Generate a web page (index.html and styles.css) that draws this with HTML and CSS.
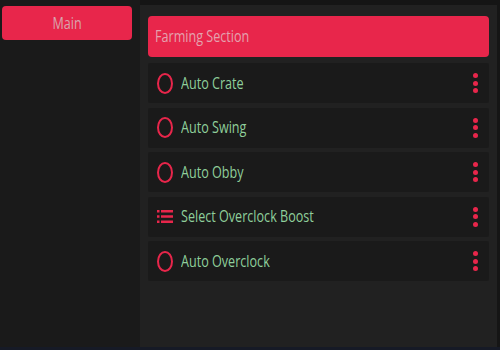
FILE: index.html
```html
<!DOCTYPE html>
<html lang="en">
<head>
  <meta charset="UTF-8">
  <title>Farming</title>
  <link rel="stylesheet" href="styles.css">
</head>
<body>

<div class="window">
  <div class="sidebar">
    <button class="tab active"><span>Main</span></button>
  </div>

  <div class="panel">
    <div class="section-title"><span>Farming Section</span></div>

    <div class="row">
      <span class="toggle"></span>
      <span class="label">Auto Crate</span>
      <span class="more"><i></i><i></i><i></i></span>
    </div>

    <div class="row">
      <span class="toggle"></span>
      <span class="label">Auto Swing</span>
      <span class="more"><i></i><i></i><i></i></span>
    </div>

    <div class="row">
      <span class="toggle"></span>
      <span class="label">Auto Obby</span>
      <span class="more"><i></i><i></i><i></i></span>
    </div>

    <div class="row">
      <svg class="list-icon" width="16" height="13" viewBox="0 0 16 13">
        <rect x="0" y="0" width="2.5" height="2.5" fill="#e8264b"/>
        <rect x="4" y="0" width="12" height="2.5" fill="#e8264b"/>
        <rect x="0" y="5.25" width="2.5" height="2.5" fill="#e8264b"/>
        <rect x="4" y="5.25" width="12" height="2.5" fill="#e8264b"/>
        <rect x="0" y="10.5" width="2.5" height="2.5" fill="#e8264b"/>
        <rect x="4" y="10.5" width="12" height="2.5" fill="#e8264b"/>
      </svg>
      <span class="label">Select Overclock Boost</span>
      <span class="more"><i></i><i></i><i></i></span>
    </div>

    <div class="row">
      <span class="toggle"></span>
      <span class="label">Auto Overclock</span>
      <span class="more"><i></i><i></i><i></i></span>
    </div>
  </div>
</div>

</body>
</html>
```

FILE: styles.css
```css
html, body {
  margin: 0;
  height: 100%;
}

body {
  background-color: #151515;
  font-family: 'Open Sans', 'Noto Sans', sans-serif;
}

.window {
  display: flex;
  height: 347px;
  border-bottom: 3px solid #161a26;
}

.sidebar {
  width: 140px;
  background-color: #1a1a1a;
  padding: 6px 8px 0 2px;
  box-sizing: border-box;
}

.tab {
  display: block;
  width: 130px;
  height: 34px;
  border: none;
  border-radius: 4px;
  background-color: #e8264b;
  color: #d9a3ad;
  font-family: inherit;
  font-size: 12.6px;
  cursor: pointer;
}

.tab span,
.section-title span {
  display: inline-block;
  transform: scaleY(1.22);
}

.panel {
  flex: 1;
  margin: 5px 3px 0 0;
  padding: 11px 8px 0 8px;
  background-color: #212121;
  display: flex;
  flex-direction: column;
  gap: 4.5px;
}

.section-title {
  height: 41px;
  line-height: 41px;
  padding-left: 7px;
  margin-bottom: 1.5px;
  background-color: #e8264b;
  border-radius: 4px;
  color: #e4a2ae;
  font-size: 12.6px;
}

.row {
  height: 40px;
  display: flex;
  align-items: center;
  padding: 0 11px 0 9px;
  background-color: #1a1a1a;
  border-radius: 2px;
}

.toggle {
  width: 12px;
  height: 17px;
  border: 2px solid #e8264b;
  border-radius: 50%;
}

.list-icon {
  width: 16px;
}

.label {
  margin-left: 8px;
  color: #8fcf9b;
  font-size: 12.6px;
  flex: 1;
  transform: scaleY(1.22);
}

.more {
  display: flex;
  flex-direction: column;
  gap: 2.5px;
}

.more i {
  display: block;
  width: 5px;
  height: 5px;
  border-radius: 50%;
  background-color: #e8264b;
}
```
